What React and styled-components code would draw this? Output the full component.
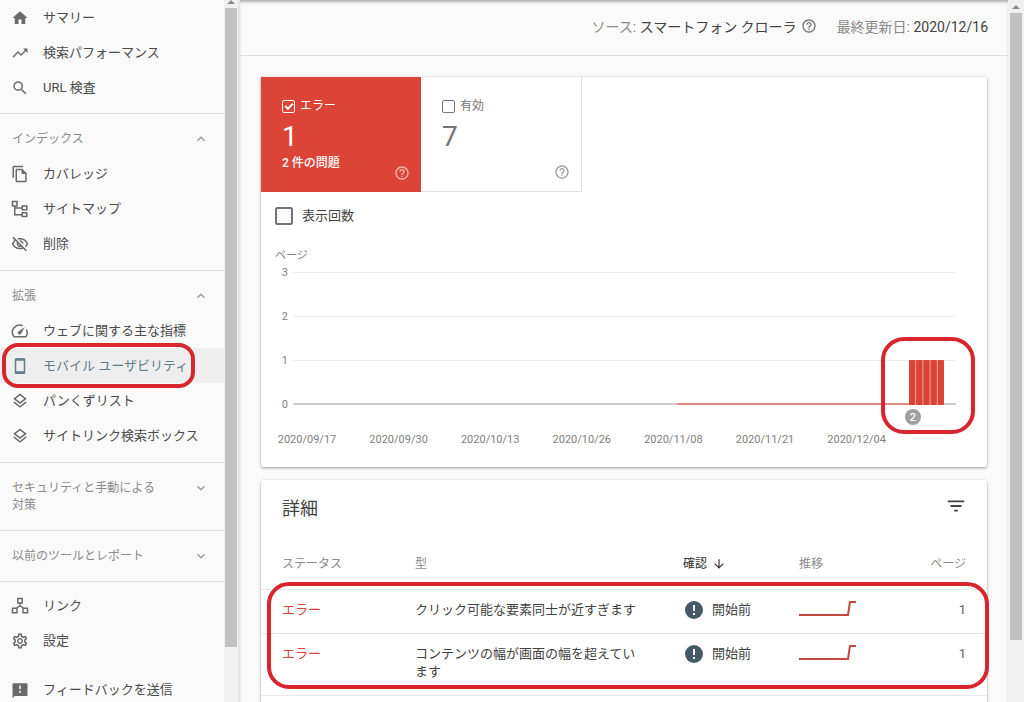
import React, { useState } from 'react';
import styled, { createGlobalStyle, css } from 'styled-components';
import {
    MdHome, MdTrendingUp, MdSearch, MdOutlineFileCopy, MdOutlineVisibilityOff,
    MdOutlineLayers, MdOutlineSettings,
    MdExpandLess, MdExpandMore, MdHelpOutline, MdFilterList, MdArrowDownward,
} from 'react-icons/md';

const RED = '#db4437';
const RING = '#d7262e';

const GlobalStyle = createGlobalStyle`
    *, *::before, *::after { box-sizing: border-box; }
    body {
        margin: 0;
        overflow: hidden;
        background: #fafafa;
        color: #424242;
        font-family: Roboto, "Noto Sans CJK JP", sans-serif;
        font-size: 13px;
    }
    button, input { font: inherit; color: inherit; }
`;

const Page = styled.div`
    display: flex;
    height: 100vh;
    overflow: hidden;
`;

/* サイドバー */
const Sidebar = styled.nav`
    flex: 0 0 224px;
    overflow: hidden;
`;

const NavGroup = styled.div`
    padding: 7px 0 ${(p) => (p.$open ? 9 : 8)}px;
    border-top: 1px solid #e0e0e0;
`;

const TopGroup = styled.div`
    padding-bottom: 8px;
`;

const BottomGroup = styled.div`
    display: flex;
    flex-direction: column;
    gap: 14px;
    padding-top: 6px;
    border-top: 1px solid #e0e0e0;
`;

const GroupButton = styled.button`
    display: flex;
    justify-content: space-between;
    width: 100%;
    padding: 10px 15px 8px 12px;
    border: 0;
    background: none;
    color: #8a8a8a;
    font-size: 12px;
    line-height: 17px;
    text-align: left;

    span { max-width: 150px; }
    svg { flex: none; width: 16px; height: 16px; color: #9a9a9a; }
`;

const NavLink = styled.a`
    position: relative;
    display: flex;
    align-items: center;
    gap: 14px;
    height: 35px;
    padding-left: 11px;
    color: #4a4a4a;
    line-height: 18px;
    text-decoration: none;
    white-space: nowrap;

    svg { flex: none; width: 18px; height: 18px; color: #6a6a6a; }

    ${(p) => p.$active && css`
        background: #eeeeee;
        color: #607d8b;
        svg { color: #607d8b; }
    `}
`;

const NavRing = styled.span`
    position: absolute;
    inset: -5px 29px -5px 2px;
    border: 4px solid ${RING};
    border-radius: 16px;
    pointer-events: none;
`;

/* スクロールバー */
const Track = styled.div`
    display: flex;
    flex-direction: column;
    align-items: center;
    flex: 0 0 16px;
    padding-top: ${(p) => p.$top}px;
    background: #f1f1f1;
    border-right: ${(p) => (p.$edge ? '2px solid #e4e4e4' : '0')};

    svg { flex: none; display: block; width: 8px; height: 4px; fill: #8c8c8c; }
`;

const Thumb = styled.div`
    width: 12px;
    height: ${(p) => p.$size}%;
    margin-top: 4px;
    background: #c1c1c1;
`;

/* メイン */
const Main = styled.main`
    flex: 1;
    min-width: 0;
    overflow: hidden;
    box-shadow: inset 0 3px 3px -1px #b0b0b0;
`;

const ReportHeader = styled.header`
    display: flex;
    justify-content: flex-end;
    align-items: center;
    gap: 20px;
    height: 56px;
    padding: 0 20px 4px;
    border-bottom: 1px solid #e0e0e0;
    color: #8a8a8a;
    font-size: 14px;
    white-space: nowrap;

    b { color: #424242; font-weight: 400; }
`;

const Source = styled.div`
    display: flex;
    align-items: center;
    gap: 4px;
`;

const HelpButton = styled.button`
    display: flex;
    padding: 0;
    border: 0;
    background: none;
    color: ${(p) => p.$color || '#757575'};

    svg { width: 16px; height: 16px; }
`;

const Content = styled.div`
    display: flex;
    flex-direction: column;
    gap: 13px;
    padding: 21px 21px 0;
`;

const Card = styled.section`
    background: #fff;
    border-radius: 2px;
    box-shadow: 0 1px 3px rgba(0, 0, 0, 0.4);
`;

const Tiles = styled.div`
    display: flex;
`;

const Tile = styled.div`
    display: grid;
    grid-template-columns: 1fr auto;
    width: ${(p) => (p.$filled ? 160 : 161)}px;
    height: 115px;
    padding: 20px 11px 11px 21px;
    border: solid #e0e0e0;
    border-width: ${(p) => (p.$filled ? '0' : '0 1px 1px 0')};
    background: ${(p) => (p.$filled ? RED : '#fff')};
    color: ${(p) => (p.$filled ? '#fff' : '#757575')};

    ${HelpButton} { align-self: end; }
`;

const TileLabel = styled.label`
    display: flex;
    align-items: center;
    gap: 5px;
    font-size: 12px;
    line-height: 18px;
`;

const TileCount = styled.div`
    margin-top: 4px;
    font-size: 28px;
    line-height: 36px;
`;

const TileNote = styled.div`
    font-size: 12px;
    font-weight: 500;
    line-height: 16px;
`;

const Check = styled.input`
    appearance: none;
    display: grid;
    place-items: center;
    flex: none;
    width: ${(p) => p.$size}px;
    height: ${(p) => p.$size}px;
    margin: 0;
    border: ${(p) => (p.$size > 14 ? 2 : 1)}px solid currentColor;
    border-radius: 2px;

    &:checked::after {
        content: '';
        width: 8px;
        height: 5px;
        margin-bottom: 2px;
        border: solid currentColor;
        border-width: 0 0 2px 2px;
        transform: rotate(-45deg);
    }
`;

const MetricLabel = styled.label`
    display: flex;
    align-items: center;
    gap: 9px;
    padding: 15px 14px;
    line-height: 18px;

    ${Check} { color: #757575; }
`;

const Chart = styled.svg`
    display: block;
    width: 100%;
    height: auto;
    font-size: 11px;
    fill: #808080;
`;

/* 詳細テーブル */
const DetailHeader = styled.div`
    display: flex;
    justify-content: space-between;
    align-items: center;
    padding: 15px 20px 14px 21px;

    h2 {
        margin: 0;
        font-size: 18px;
        font-weight: 400;
        line-height: 28px;
    }
`;

const FilterButton = styled.button`
    display: flex;
    padding: 0 0 6px;
    border: 0;
    background: none;

    svg { width: 22px; height: 22px; }
`;

const TableWrap = styled.div`
    position: relative;
    padding-bottom: 60px;
`;

const Table = styled.table`
    width: 100%;
    table-layout: fixed;
    border-spacing: 0;

    th, td {
        padding: 11px 0 14px;
        border-bottom: 1px solid #e8e8e8;
        line-height: 18px;
        text-align: left;
        vertical-align: top;
    }
    th {
        padding: 18px 0 16px;
        color: #8a8a8a;
        font-size: 12px;
        font-weight: 400;
    }
    th:first-child, td:first-child { width: 154px; padding-left: 21px; }
    th:nth-child(2), td:nth-child(2) { width: 268px; padding-right: 40px; }
    th:nth-child(3) { width: 116px; }
    th:last-child, td:last-child { width: 80px; padding-right: 21px; text-align: right; }
    td:first-child { color: ${RED}; }
    td:last-child { color: #616161; }
`;

const SortButton = styled.button`
    display: flex;
    align-items: center;
    gap: 5px;
    padding: 0;
    border: 0;
    background: none;
    color: #303030;

    svg { width: 14px; height: 14px; }
`;

const Validation = styled.div`
    display: flex;
    align-items: center;
    gap: 9px;

    svg { flex: none; width: 20px; height: 18px; }
`;

const Spark = styled.svg`
    display: block;
    width: 58px;
    height: 18px;
`;

const TableRing = styled.div`
    position: absolute;
    inset: 45px -2px auto 6px;
    height: 107px;
    border: 4px solid ${RING};
    border-radius: 22px;
    pointer-events: none;
`;

const SitemapIcon = () => (
    <svg viewBox="0 0 24 24" fill="none" stroke="currentColor" strokeWidth="2">
        <path d="M2 2h6v6H2zM15 8h6v5h-6zM15 17h6v5h-6zM5 8v11.500h10M5 10.500h10" />
    </svg>
);

const GaugeIcon = () => (
    <svg viewBox="0 0 24 24" fill="none" stroke="currentColor" strokeWidth="2">
        <path d="M15.500 5A9.500 9.500 0 0 0 4 19.500h16A9.500 9.500 0 0 0 20.500 10" />
        <path d="M18.500 6.500l-8 5.700a2.300 2.300 0 1 0 3 3z" fill="currentColor" stroke="none" />
    </svg>
);

const PhoneIcon = () => (
    <svg viewBox="0 0 24 24" fill="none" stroke="currentColor">
        <rect x="6" y="2.500" width="12" height="19" rx="1" strokeWidth="2" />
        <path d="M5.500 3.500h13M5.500 20.500h13" strokeWidth="3" />
    </svg>
);

const LinksIcon = () => (
    <svg viewBox="0 0 24 24" fill="none" stroke="currentColor" strokeWidth="2">
        <path d="M9 2h6v6H9zM2 15h6v6H2zM16 15h6v6h-6zM12 8v4M7 15l5-3.500 5 3.500" />
    </svg>
);

const FeedbackIcon = () => (
    <svg viewBox="0 0 24 24" fill="currentColor" fillRule="evenodd">
        <path d="M3 3h18a1 1 0 0 1 1 1v15a1 1 0 0 1-1 1H5l-3 3V4a1 1 0 0 1 1-1zM11 6v5h2V6zM11 13v3h2v-3z" />
    </svg>
);

const topItems = [
    { label: 'サマリー', icon: MdHome },
    { label: '検索パフォーマンス', icon: MdTrendingUp },
    { label: 'URL 検査', icon: MdSearch },
];

const groups = [
    {
        title: 'インデックス',
        items: [
            { label: 'カバレッジ', icon: MdOutlineFileCopy },
            { label: 'サイトマップ', icon: SitemapIcon },
            { label: '削除', icon: MdOutlineVisibilityOff },
        ],
    },
    {
        title: '拡張',
        items: [
            { label: 'ウェブに関する主な指標', icon: GaugeIcon },
            { label: 'モバイル ユーザビリティ', icon: PhoneIcon, active: true },
            { label: 'パンくずリスト', icon: MdOutlineLayers },
            { label: 'サイトリンク検索ボックス', icon: MdOutlineLayers },
        ],
    },
    { title: 'セキュリティと手動による対策', items: [] },
    { title: '以前のツールとレポート', items: [] },
];

const bottomItems = [
    { label: 'リンク', icon: LinksIcon },
    { label: '設定', icon: MdOutlineSettings },
];

const dates = ['2020/09/17', '2020/09/30', '2020/10/13', '2020/10/26', '2020/11/08', '2020/11/21', '2020/12/04'];

const issues = [
    { id: 1, type: 'クリック可能な要素同士が近すぎます', pages: 1 },
    { id: 2, type: 'コンテンツの幅が画面の幅を超えています', pages: 1 },
];

function NavItem({ item }) {
    const Icon = item.icon;
    return (
        <NavLink href="#" $active={item.active}>
            <Icon />
            {item.label}
            {item.active && <NavRing />}
        </NavLink>
    );
}

function ScrollBar({ top, size, edge }) {
    return (
        <Track $top={top} $edge={edge} aria-hidden="true">
            <svg viewBox="0 0 8 4"><path d="M0 4l4-4 4 4z" /></svg>
            <Thumb $size={size} />
        </Track>
    );
}

function PageChart() {
    return (
        <Chart viewBox="0 0 726 227" role="img" aria-label="ページ">
            <text x="14" y="19">ページ</text>
            {[3, 2, 1, 0].map((n, i) => (
                <g key={n}>
                    <text x="27" y={36 + i * 44} textAnchor="end">{n}</text>
                    <rect x="32" y={n === 0 ? 163 : 32 + i * 44} width="663" height={n === 0 ? 2 : 1} fill={n === 0 ? '#cccccc' : '#eeeeee'} />
                </g>
            ))}
            <path d="M416 164h233" stroke="#e57368" strokeWidth="1.5" />
            <rect x="648" y="120" width="35" height="45" fill="#f0a39c" />
            {[0, 1, 2, 3, 4].map((i) => (
                <rect key={i} x={648 + i * 7.2} y="120" width="6.2" height="45" rx="1" fill={RED} />
            ))}
            <circle cx="652" cy="177" r="8" fill="#9e9e9e" />
            <text x="652" y="181" textAnchor="middle" fill="#fff" fontWeight="500">2</text>
            {dates.map((d, i) => (
                <text key={d} x={46 + i * 91.6} y="203" textAnchor="middle">{d}</text>
            ))}
            <rect x="622" y="99" width="90" height="93" rx="21" fill="none" stroke={RING} strokeWidth="4" />
        </Chart>
    );
}

function App() {
    const [showError, setShowError] = useState(true);
    const [showValid, setShowValid] = useState(false);
    const [showViews, setShowViews] = useState(false);

    return (
        <>
            <GlobalStyle />
            <Page>
                <Sidebar>
                    <TopGroup>
                        {topItems.map((item) => <NavItem key={item.label} item={item} />)}
                    </TopGroup>
                    {groups.map((g) => {
                        const open = g.items.length > 0;
                        return (
                            <NavGroup key={g.title} $open={open}>
                                <GroupButton type="button" aria-expanded={open}>
                                    <span>{g.title}</span>
                                    {open ? <MdExpandLess /> : <MdExpandMore />}
                                </GroupButton>
                                {g.items.map((item) => <NavItem key={item.label} item={item} />)}
                            </NavGroup>
                        );
                    })}
                    <BottomGroup>
                        <div>
                            {bottomItems.map((item) => <NavItem key={item.label} item={item} />)}
                        </div>
                        <NavItem item={{ label: 'フィードバックを送信', icon: FeedbackIcon }} />
                    </BottomGroup>
                </Sidebar>
                <ScrollBar top={0} size={91} edge />

                <Main>
                    <ReportHeader>
                        <Source>
                            <span>ソース: <b>スマートフォン クローラ</b></span>
                            <HelpButton type="button" aria-label="ヘルプ"><MdHelpOutline /></HelpButton>
                        </Source>
                        <span>最終更新日: <b>2020/12/16</b></span>
                    </ReportHeader>
                    <Content>
                        <Card>
                            <Tiles>
                                <Tile $filled>
                                    <div>
                                        <TileLabel>
                                            <Check type="checkbox" $size={13} checked={showError} onChange={(e) => setShowError(e.target.checked)} />
                                            エラー
                                        </TileLabel>
                                        <TileCount>1</TileCount>
                                        <TileNote>2 件の問題</TileNote>
                                    </div>
                                    <HelpButton type="button" aria-label="ヘルプ" $color="#f3b8b2"><MdHelpOutline /></HelpButton>
                                </Tile>
                                <Tile>
                                    <div>
                                        <TileLabel>
                                            <Check type="checkbox" $size={13} checked={showValid} onChange={(e) => setShowValid(e.target.checked)} />
                                            有効
                                        </TileLabel>
                                        <TileCount>7</TileCount>
                                    </div>
                                    <HelpButton type="button" aria-label="ヘルプ" $color="#9e9e9e"><MdHelpOutline /></HelpButton>
                                </Tile>
                            </Tiles>
                            <MetricLabel>
                                <Check type="checkbox" $size={18} checked={showViews} onChange={(e) => setShowViews(e.target.checked)} />
                                表示回数
                            </MetricLabel>
                            <PageChart />
                        </Card>

                        <Card>
                            <DetailHeader>
                                <h2>詳細</h2>
                                <FilterButton type="button" aria-label="フィルタ"><MdFilterList /></FilterButton>
                            </DetailHeader>
                            <TableWrap>
                                <Table>
                                    <thead>
                                        <tr>
                                            <th>ステータス</th>
                                            <th>型</th>
                                            <th><SortButton type="button">確認<MdArrowDownward /></SortButton></th>
                                            <th>推移</th>
                                            <th>ページ</th>
                                        </tr>
                                    </thead>
                                    <tbody>
                                        {issues.map((issue) => (
                                            <tr key={issue.id}>
                                                <td>エラー</td>
                                                <td>{issue.type}</td>
                                                <td>
                                                    <Validation>
                                                        <svg viewBox="0 0 20 18">
                                                            <circle cx="11" cy="9" r="9" fill="#455a64" />
                                                            <path d="M10 4h2v6h-2zM10 12h2v2h-2z" fill="#fff" />
                                                        </svg>
                                                        開始前
                                                    </Validation>
                                                </td>
                                                <td>
                                                    <Spark viewBox="0 0 58 18">
                                                        <path d="M0 14h49l2-13h6" fill="none" stroke="#c5473d" strokeWidth="2" />
                                                    </Spark>
                                                </td>
                                                <td>{issue.pages}</td>
                                            </tr>
                                        ))}
                                    </tbody>
                                </Table>
                                <TableRing />
                            </TableWrap>
                        </Card>
                    </Content>
                </Main>
                <ScrollBar top={5} size={90} />
            </Page>
        </>
    );
}

export default App;
